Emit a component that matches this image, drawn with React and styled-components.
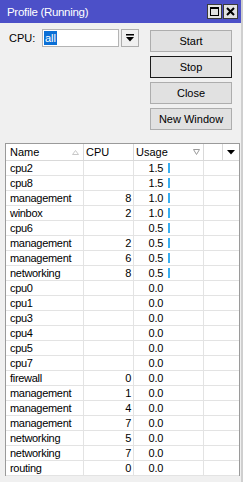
import React from 'react'
import styled, { createGlobalStyle, css } from 'styled-components'

const GlobalStyle = createGlobalStyle`
  body {
    margin: 0;
    background: #f0f0f0;
    font-family: "Liberation Sans", Arial, sans-serif;
  }
`

const Window = styled.div`
  width: 243px;
  height: 482px;
  box-sizing: border-box;
  background: #f0f0f0;
  border-right: 2px solid #cfcfcf;
  display: flex;
  flex-direction: column;
  overflow: hidden;
  font-size: 11px;
  color: #000;
`

const TitleBar = styled.div`
  height: 23px;
  flex: none;
  background: #4c50c8;
  color: #fff;
  display: flex;
  align-items: center;
  padding: 0 3px 0 7px;
  font-size: 11.5px;
  letter-spacing: -0.3px;
`

const TitleButtons = styled.div`
  margin-left: auto;
  display: flex;
  gap: 1px;
`

const TitleButton = styled.div`
  width: 15px;
  height: 15px;
  box-sizing: border-box;
  border: 1px solid #3a3a3a;
  background: #e2e2e2;
  display: flex;
  align-items: center;
  justify-content: center;
`

const Body = styled.div`
  padding-top: 6px;
  display: flex;
  flex-direction: column;
`

const Controls = styled.div`
  display: flex;
  padding: 0 9px;
`

const Field = styled.div`
  display: flex;
  align-items: center;
  height: 18px;
`

const Label = styled.span`
  width: 33px;
`

const Input = styled.div`
  width: 77px;
  height: 18px;
  box-sizing: border-box;
  border: 1px solid #b4b4b4;
  background: #fff;
  display: flex;
  align-items: center;
  padding-left: 1px;
`

const Selected = styled.span`
  background: #0a6fd6;
  color: #fff;
  padding: 0 1px;
  line-height: 14px;
`

const DropButton = styled.div`
  width: 18px;
  height: 18px;
  box-sizing: border-box;
  margin-left: 2px;
  border: 1px solid #adadad;
  background: #f0f0f0;
  display: flex;
  align-items: center;
  justify-content: center;
`

const ButtonColumn = styled.div`
  margin-left: auto;
  margin-top: 1px;
  display: flex;
  flex-direction: column;
  gap: 4px;
`

const Button = styled.div`
  width: 82px;
  height: 22px;
  box-sizing: border-box;
  border: 1px solid #adadad;
  background: #e1e1e1;
  display: flex;
  align-items: center;
  justify-content: center;
  ${p => p.focused && css`
    border-color: #1a1a1a;
  `}
`

const Table = styled.div`
  margin: 13px 1px 0 5px;
  border: 1px solid #9a9a9a;
  border-bottom: none;
  background: #fff;
  flex: 1;
`

const Header = styled.div`
  display: grid;
  grid-template-columns: 78px 50px 70px 19px 1fr;
  height: 17px;
`

const Row = styled.div`
  display: grid;
  grid-template-columns: 78px 50px 70px 1fr;
  height: 15px;
  letter-spacing: -0.3px;
`

const Cell = styled.div`
  box-sizing: border-box;
  border-right: 1px solid #e3e3e3;
  border-bottom: 1px solid #e3e3e3;
  display: flex;
  align-items: center;
  white-space: nowrap;
  overflow: hidden;
  padding-left: ${p => p.pl || 0}px;
  padding-right: ${p => p.pr || 0}px;
  justify-content: ${p => p.right ? 'flex-end' : 'flex-start'};
  ${p => p.last && css`border-right: none;`}
`

const HeadCell = styled(Cell)`
  border-color: #d9d9d9;
  justify-content: ${p => p.center ? 'center' : 'space-between'};
`

const Value = styled.span`
  width: 29px;
  text-align: right;
`

const Bar = styled.span`
  width: 2px;
  height: 10px;
  margin-left: 5px;
  background: #38aef0;
`

const rows = [
  ['cpu2', '', '1.5', true],
  ['cpu8', '', '1.5', true],
  ['management', '8', '1.0', true],
  ['winbox', '2', '1.0', true],
  ['cpu6', '', '0.5', true],
  ['management', '2', '0.5', true],
  ['management', '6', '0.5', true],
  ['networking', '8', '0.5', true],
  ['cpu0', '', '0.0'],
  ['cpu1', '', '0.0'],
  ['cpu3', '', '0.0'],
  ['cpu4', '', '0.0'],
  ['cpu5', '', '0.0'],
  ['cpu7', '', '0.0'],
  ['firewall', '0', '0.0'],
  ['management', '1', '0.0'],
  ['management', '4', '0.0'],
  ['management', '7', '0.0'],
  ['networking', '5', '0.0'],
  ['networking', '7', '0.0'],
  ['routing', '0', '0.0'],
]

export default function App() {
  return (
    <>
      <GlobalStyle />
      <Window>
        <TitleBar>
          Profile (Running)
          <TitleButtons>
            <TitleButton>
              <svg width="9" height="9" viewBox="0 0 9 9">
                <rect x="0.5" y="0.5" width="8" height="8" fill="none" stroke="#000" />
                <rect x="0" y="0" width="9" height="2" fill="#000" />
              </svg>
            </TitleButton>
            <TitleButton>
              <svg width="9" height="9" viewBox="0 0 9 9">
                <path d="M1 1 L8 8 M8 1 L1 8" stroke="#000" strokeWidth="2" />
              </svg>
            </TitleButton>
          </TitleButtons>
        </TitleBar>
        <Body>
          <Controls>
            <Field>
              <Label>CPU:</Label>
              <Input><Selected>all</Selected></Input>
              <DropButton>
                <svg width="8" height="8" viewBox="0 0 8 8">
                  <rect x="0" y="0" width="8" height="1.5" fill="#000" />
                  <path d="M0 3 H8 L4 7.5 Z" fill="#000" />
                </svg>
              </DropButton>
            </Field>
            <ButtonColumn>
              <Button>Start</Button>
              <Button focused>Stop</Button>
              <Button>Close</Button>
              <Button>New Window</Button>
            </ButtonColumn>
          </Controls>
          <Table>
            <Header>
              <HeadCell pl={4} pr={4}>
                Name
                <svg width="7" height="5" viewBox="0 0 7 5">
                  <path d="M0.5 4.5 L3.5 0.5 L6.5 4.5 Z" fill="none" stroke="#c8c8c8" />
                </svg>
              </HeadCell>
              <HeadCell pl={2}>CPU</HeadCell>
              <HeadCell pl={2} pr={3}>
                Usage
                <svg width="7" height="6" viewBox="0 0 7 6">
                  <path d="M0.5 0.5 H6.5 L3.5 5.5 Z" fill="none" stroke="#9a9a9a" />
                </svg>
              </HeadCell>
              <HeadCell />
              <HeadCell last center>
                <svg width="8" height="5" viewBox="0 0 8 5">
                  <path d="M0 0 H8 L4 4.5 Z" fill="#000" />
                </svg>
              </HeadCell>
            </Header>
            {rows.map(([name, cpu, usage, bar], i) => (
              <Row key={i}>
                <Cell pl={4}>{name}</Cell>
                <Cell right pr={2}>{cpu}</Cell>
                <Cell>
                  <Value>{usage}</Value>
                  {bar && <Bar />}
                </Cell>
                <Cell last />
              </Row>
            ))}
          </Table>
        </Body>
      </Window>
    </>
  )
}
